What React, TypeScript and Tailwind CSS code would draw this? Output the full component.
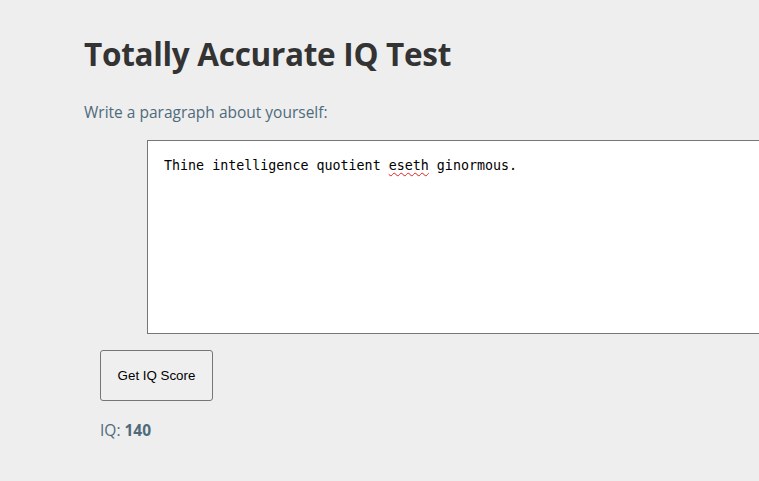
import React from 'react';

export default function App() {
  return (
    <div className="min-h-screen w-full overflow-hidden bg-[#eeeeee] pl-[84px] pt-[30px] font-['Open_Sans',sans-serif]">
      <h1 className="text-[31.5px] font-bold leading-[48px] text-[#333333] tracking-[-0.3px]">
        Totally Accurate IQ Test
      </h1>
      <p className="mt-[22px] text-[15.5px] leading-[24px] text-[#4e6b7c]">
        Write a paragraph about yourself:
      </p>
      <div className="mt-[16px] ml-[63px] h-[194px] w-[640px] border border-[#767676] bg-white px-[16px] pt-[16px]">
        <div className="font-['DejaVu_Sans_Mono',monospace] text-[13.33px] leading-[18px] text-black">
          Thine intelligence quotient{' '}
          <span className="underline decoration-wavy decoration-[#e02020] decoration-1 underline-offset-2">eseth</span>{' '}
          ginormous.
        </div>
      </div>
      <button className="mt-[16px] ml-[16px] h-[51px] w-[113px] rounded-[3px] border border-[#767676] bg-[#efefef] font-['Liberation_Sans',sans-serif] text-[13.33px] text-black">
        Get IQ Score
      </button>
      <p className="mt-[17px] ml-[16px] text-[15.5px] leading-[24px] text-[#4e6b7c]">
        IQ: <span className="font-bold">140</span>
      </p>
    </div>
  );
}
